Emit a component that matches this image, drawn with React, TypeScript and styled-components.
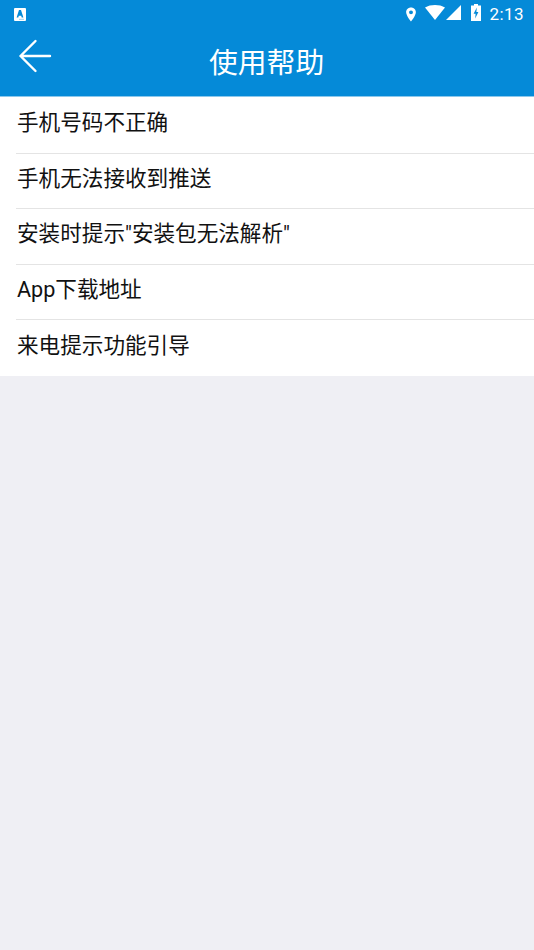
import styled, { createGlobalStyle } from 'styled-components';

const GlobalStyle = createGlobalStyle`
  html, body {
    margin: 0;
    padding: 0;
    background-color: #efeff4;
    font-family: Roboto, "Noto Sans CJK SC", sans-serif;
  }
`;

const Page = styled.div`
  width: 534px;
  height: 950px;
  background-color: #efeff4;
  overflow: hidden;
`;

const Header = styled.div`
  height: 96px;
  background-color: #058ad8;
  border-bottom: 1px solid #8cc8ec;
  box-sizing: content-box;
`;

const StatusBar = styled.div`
  height: 28px;
  display: flex;
  align-items: center;
  justify-content: space-between;
  padding: 0 10px 0 14px;
`;

const StatusIcons = styled.div`
  display: flex;
  align-items: center;
`;

const StatusGlyph = styled.svg<{ $left?: number; $raise?: number }>`
  display: block;
  margin-left: ${({ $left }) => $left ?? 0}px;
  margin-bottom: ${({ $raise }) => $raise ?? 0}px;
`;

const Clock = styled.span`
  color: #fff;
  font-size: 17px;
  font-family: Roboto, sans-serif;
  margin-left: 9px;
  letter-spacing: 0.4px;
`;

const TitleBar = styled.div`
  height: 68px;
  display: flex;
  align-items: center;
  padding-left: 17px;
`;

const BackButton = styled.div`
  width: 36px;
  height: 36px;
  margin-top: -10px;
`;

const Title = styled.h1`
  margin: 2px 0 0 156px;
  color: #fff;
  font-size: 28.8px;
  font-weight: 400;
  line-height: 1;
`;

const List = styled.div`
  background-color: #fff;
  padding: 1px 0 0 16px;
`;

const Row = styled.div<{ $last?: boolean }>`
  height: 55.6px;
  box-sizing: border-box;
  display: flex;
  align-items: center;
  padding-bottom: 9px;
  border-bottom: ${({ $last }) => ($last ? 'none' : '1px solid #e4e4e4')};
`;

const RowLabel = styled.span`
  margin-left: 1px;
  font-size: 21.6px;
  color: #111;
`;

const rows = [
  '手机号码不正确',
  '手机无法接收到推送',
  '安装时提示"安装包无法解析"',
  'App下载地址',
  '来电提示功能引导',
];

const App = () => {
  return (
    <Page>
      <GlobalStyle />
      <Header>
        <StatusBar>
          <StatusGlyph width="12" height="13" viewBox="0 0 12 13">
            <rect width="12" height="13" rx="1" fill="#fff" />
            <path d="M2.6 9.5 L5 2 H7 L9.4 9.5 H7.7 L7.2 7.8 H4.8 L4.3 9.5 Z" fill="#058ad8" />
            <rect x="5" y="10.8" width="5" height="1" fill="#9ccfee" />
          </StatusGlyph>
          <StatusIcons>
            <StatusGlyph width="12" height="15" viewBox="0 0 12 16">
              <path
                fillRule="evenodd"
                d="M6 0.5 C2.9 0.5 0.8 2.8 0.8 5.6 C0.8 9.2 6 15.5 6 15.5 C6 15.5 11.2 9.2 11.2 5.6 C11.2 2.8 9.1 0.5 6 0.5 Z M6 3.6 A2.1 2.1 0 1 1 6 7.8 A2.1 2.1 0 1 1 6 3.6 Z"
                fill="#fff"
              />
            </StatusGlyph>
            <StatusGlyph width="20" height="15" viewBox="0 0 20 15" $left={8} $raise={3}>
              <path d="M0 2.5 C5.5 -0.8 14.5 -0.8 20 2.5 L10 15 Z" fill="#fff" />
            </StatusGlyph>
            <StatusGlyph width="15" height="15" viewBox="0 0 15 15" $left={1} $raise={3}>
              <path d="M15 0 V15 H0 Z" fill="#fff" />
            </StatusGlyph>
            <StatusGlyph width="10" height="17" viewBox="0 0 10 17" $left={10} $raise={3}>
              <path
                fillRule="evenodd"
                d="M3 0 H7 V1.5 H10 V17 H0 V1.5 H3 Z M5.8 3.5 L2.6 9.7 H4.6 L4.2 14.5 L7.4 8 H5.4 Z"
                fill="#fff"
              />
            </StatusGlyph>
            <Clock>2:13</Clock>
          </StatusIcons>
        </StatusBar>
        <TitleBar>
          <BackButton>
            <svg width="36" height="36" viewBox="0 0 36 36" fill="none">
              <path
                d="M3.5 17 H33 M18.5 2 L3.5 17 L18.5 32"
                stroke="#fff"
                strokeWidth="2.4"
                strokeLinecap="round"
                strokeLinejoin="round"
              />
            </svg>
          </BackButton>
          <Title>使用帮助</Title>
        </TitleBar>
      </Header>
      <List>
        {rows.map((text, i) => (
          <Row key={text} $last={i === rows.length - 1}>
            <RowLabel>{text}</RowLabel>
          </Row>
        ))}
      </List>
    </Page>
  );
};

export default App;
